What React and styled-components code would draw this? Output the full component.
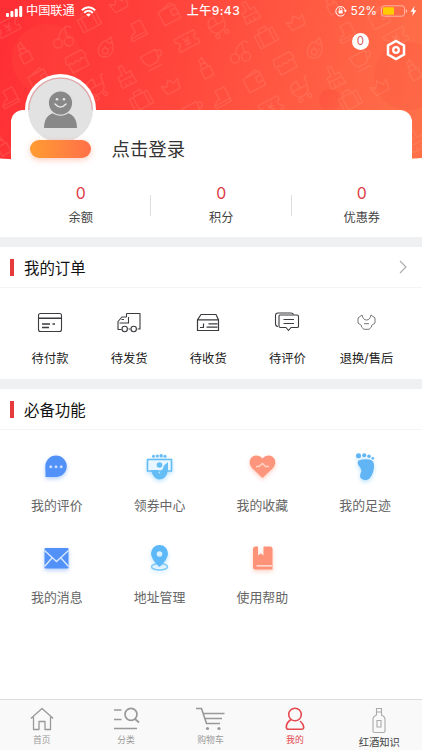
import React from 'react'
import styled, { createGlobalStyle } from 'styled-components'

const GlobalStyle = createGlobalStyle`
    * {
        box-sizing: border-box;
    }

    body {
        margin: 0;
        background: #fff;
        font-family: 'Inter', 'Noto Sans CJK SC', sans-serif;
        color: #222;
    }
`

const Page = styled.div`
    height: 750px;
    width: 422px;
    display: flex;
    flex-direction: column;
    overflow: hidden;
    background: #fff;
`

const Hero = styled.header`
    position: relative;
    height: 237px;
    flex-shrink: 0;
`

const Backdrop = styled.svg`
    position: absolute;
    top: 0;
    left: 0;
    display: block;
`

const StatusBar = styled.div`
    position: relative;
    height: 22px;
    padding: 0 5px 0 6px;
    display: grid;
    grid-template-columns: 1fr auto 1fr;
    align-items: center;
    color: #fff;
    font-size: 12px;
    line-height: 22px;
`

const StatusGroup = styled.div`
    display: flex;
    align-items: center;
    justify-content: ${props => props.$end ? 'flex-end' : 'flex-start'};
    gap: ${props => props.$end ? '4px' : '3px'};
`

const Carrier = styled.span`
    font-size: 12.2px;
    margin-right: 3px;
`

const Time = styled.div`
    padding-left: 4px;
    font-size: 12px;
    font-weight: 500;
    letter-spacing: .45px;
`

const Toolbar = styled.div`
    position: relative;
    height: 88px;
    padding: 11px 16px 0 0;
    display: flex;
    justify-content: flex-end;
    gap: 17px;
`

const Badge = styled.span`
    width: 17px;
    height: 17px;
    border-radius: 50%;
    background: #fff;
    color: #d9605f;
    font-size: 11.5px;
    line-height: 17px;
    text-align: center;
`

const SettingsIcon = styled.svg`
    margin-top: 6px;
`

const Card = styled.div`
    position: relative;
    height: 127px;
    margin: 0 10.5px;
    border-radius: 12px 12px 0 0;
    background: #fff;
`

const Profile = styled.div`
    height: 73px;
    padding-left: 14.5px;
    display: flex;
    gap: 15.5px;
`

const AvatarBox = styled.div`
    width: 71px;
    margin-top: -36px;
    display: flex;
    flex-direction: column;
    align-items: center;
`

const Avatar = styled.svg`
    flex-shrink: 0;
`

const Pill = styled.div`
    position: relative;
    flex-shrink: 0;
    width: 61px;
    height: 18px;
    margin-top: -5px;
    border-radius: 9px;
    background: linear-gradient(90deg, #ff9c32, #ff7049);
    box-shadow: 0 2px 6px rgba(255, 112, 73, .35);
`

const LoginText = styled.div`
    padding-top: 26px;
    font-size: 18.4px;
    line-height: 27px;
    color: #333;
`

const Stats = styled.div`
    width: 421.5px;
    display: grid;
    grid-template-columns: repeat(3, 1fr);
`

const Stat = styled.div`
    position: relative;
    height: 50px;
    text-align: center;

    & + &::before {
        content: '';
        position: absolute;
        left: -1px;
        top: 12px;
        width: 1px;
        height: 21px;
        background: #dedede;
    }
`

const StatValue = styled.div`
    font-size: 15.8px;
    line-height: 22px;
    color: #dc3a44;
`

const StatLabel = styled.div`
    margin-top: 4px;
    font-size: 12.2px;
    line-height: 18px;
    color: #444;
`

const Divider = styled.div`
    height: 10px;
    flex-shrink: 0;
    background: #eff0f2;
`

const SectionHead = styled.div`
    height: 41px;
    flex-shrink: 0;
    padding: 0 15px 0 10px;
    display: flex;
    align-items: center;
    border-bottom: 1px solid #f4f4f4;
`

const Mark = styled.span`
    width: 4px;
    height: 17px;
    margin-right: 10px;
    background: #e63a3c;
`

const SectionTitle = styled.h2`
    flex: 1;
    margin: 0;
    padding-top: 3px;
    font-size: 15.4px;
    font-weight: 400;
    line-height: 22px;
    color: #111;
`

const Orders = styled.div`
    height: 91px;
    flex-shrink: 0;
    padding: 21px 16px 0 10.5px;
    display: grid;
    grid-template-columns: repeat(5, 1fr);
`

const Order = styled.div`
    display: flex;
    flex-direction: column;
    align-items: center;
    gap: 14px;
    font-size: 12.3px;
    line-height: 18px;
    color: #222;
`

const Features = styled.div`
    flex: 1;
    padding: 21px 5.5px 0;
    display: grid;
    grid-template-columns: repeat(4, 1fr);
    grid-auto-rows: 91.5px;
`

const Feature = styled.div`
    display: flex;
    flex-direction: column;
    align-items: center;
    gap: 14px;
    font-size: 12.9px;
    line-height: 18px;
    color: #666;
`

const FeatureIcon = styled.svg`
    overflow: visible;
    filter: drop-shadow(0 2px 2px ${props => props.$glow});
`

const TabBar = styled.nav`
    height: 51px;
    flex-shrink: 0;
    display: grid;
    grid-template-columns: repeat(5, 1fr);
    border-top: 1px solid #dcdcdc;
    background: #f9f9f9;
`

const Tab = styled.a`
    padding-top: 7px;
    padding-right: 1px;
    display: flex;
    flex-direction: column;
    align-items: center;
    gap: ${props => props.$large ? '2px' : '1px'};
    font-size: ${props => props.$large ? '10.3px' : '8.8px'};
    line-height: 13px;
    color: ${props => props.$large ? '#444' : props.$active ? '#e5484d' : '#999'};
`

// line drawings scattered over the banner, each one centred on 0,0
const shapes = {
    ticket: <path d="M-11-7H11V-3A3 3 0 0 0 11 3V7H-11V3A3 3 0 0 0-11-3ZM-3-4 0 0 3-4M0 0V5M-3 0H3M-3 3H3" />,
    suitcase: <path d="M-10-6H10V8H-10ZM-4-6V-10H4V-6M-6-6V8M6-6V8" />,
    crown: <path d="M-7 6-9-4-4-1 0-7 4-1 9-4 7 6Z" />,
    boot: <path d="M-3-9H7V7H-10Q-11 1-3 0ZM-10 4H7" />,
    wallet: <path d="M-10-7H8V8H-10ZM8-3H2V3H8M-7-7 5-10 6-7" />,
    cherry: <path d="M-5 2Q-3-6 3-10Q2-3 6 2M3-10Q8-11 9-8M-1 6A4.500 4.500 0 1 1-10 6 4.500 4.500 0 1 1-1 6M10 5A4.500 4.500 0 1 1 1 5 4.500 4.500 0 1 1 10 5" />,
    lipstick: <path d="M-5 0H5V10H-5ZM-3 0V-5H3V0M-2-5V-9L2-11V-5" />,
    shop: <path d="M-9-8H9L11-2Q8 2 5-1Q2 3-1-1Q-5 3-7-1Q-10 1-11-2ZM-9 1V9H9V1" />,
    eggplant: <path d="M3-11Q1-8 0-7C-8-4-10 9-2 10S10 2 5-6ZM-1-6Q2-3 6-6M3 4A3 3 0 1 1-3 4 3 3 0 1 1 3 4M-2 0H0M4 0H5" />,
    cup: <path d="M-10-6H7Q7 6 1 6H-5Q-10 4-10-6ZM7-4Q12-5 11-1T5 2M-9 10H6" />,
    brush: <path d="M-2-2V-11H2V-2H7V3H-7V-2ZM-7 3-8 10H8L7 3M-3 10V6M2 10V6" />,
    stroller: <path d="M-9-2H8A8 8 0 0 1-9-2ZM8-2 9-10H12M-9-2Q-9-10 0-10V-2M-3 9A2 2 0 1 1-7 9 2 2 0 1 1-3 9M7 9A2 2 0 1 1 3 9 2 2 0 1 1 7 9" />,
}

const scatter = [
    ['ticket', 8, 27], ['crown', 119, 4], ['suitcase', 89, 21], ['boot', 138, 31], ['wallet', 170, 14],
    ['ticket', 187, 41], ['cherry', 63, 37, -5], ['lipstick', 24, 53], ['shop', 77, 61], ['eggplant', 106, 47, 10],
    ['cup', 152, 58], ['brush', 125, 76], ['crown', 171, 86], ['lipstick', 205, 68], ['boot', 10, 98],
    ['suitcase', 141, 100], ['stroller', 97, 88], ['wallet', 40, 79], ['cup', 193, 110], ['stroller', 218, 26],
    ['brush', 249, 12], ['crown', 296, 22], ['suitcase', 266, 37], ['cherry', 240, 52, -5], ['shop', 285, 63],
    ['eggplant', 315, 48, 10], ['boot', 347, 33], ['wallet', 380, 18], ['ticket', 396, 38], ['cup', 361, 59],
    ['lipstick', 413, 70], ['brush', 334, 77], ['crown', 380, 87], ['stroller', 301, 90], ['wallet', 255, 81],
    ['boot', 222, 98], ['ticket', 271, 107], ['suitcase', 350, 100], ['lipstick', 331, 4],
    ['lipstick', 2, 145], ['brush', 416, 140],
]

const Banner = () => (
    <Backdrop width="422" height="160" viewBox="0 0 422 160">
        <defs>
            <linearGradient id="banner" gradientUnits="userSpaceOnUse" x1="0" y1="60" x2="410" y2="160">
                <stop offset="0" stopColor="#fe3035" />
                <stop offset=".3" stopColor="#ff3f3a" />
                <stop offset="1" stopColor="#ff7049" />
            </linearGradient>
            <linearGradient id="bubble" x1="0" y1="0" x2="1" y2="1">
                <stop offset="0" stopColor="#ff4a3c" stopOpacity=".5" />
                <stop offset="1" stopColor="#f8453c" stopOpacity=".1" />
            </linearGradient>
        </defs>
        <path d="M0 0H422V158Q211 172 0 158.500Z" fill="url(#banner)" />
        <circle cx="47" cy="59" r="35" fill="#ff5a40" opacity=".18" />
        <circle cx="330" cy="100" r="11" fill="url(#bubble)" />
        <circle cx="408" cy="76" r="34" fill="#f84a3c" opacity=".2" />
        <g fill="none" stroke="#ffb0a0" strokeOpacity=".17" strokeWidth="1.400" strokeLinejoin="round">
            {scatter.map(([name, x, y, turn = -28], i) => (
                <g key={i} transform={`translate(${x} ${y}) rotate(${turn})`}>{shapes[name]}</g>
            ))}
        </g>
    </Backdrop>
)

const Signal = () => (
    <svg width="17" height="11" viewBox="0 0 17 11" fill="#fff">
        <rect x="0" y="7" width="3" height="4" rx="1" />
        <rect x="4.400" y="5" width="3" height="6" rx="1" />
        <rect x="8.800" y="2.800" width="3" height="8.200" rx="1" />
        <rect x="13.200" y="0" width="3" height="11" rx="1" />
    </svg>
)

const Wifi = () => (
    <svg width="15" height="11" viewBox="0 0 15 11" fill="none" stroke="#fff" strokeWidth="1.900">
        <path d="M.8 4.200Q7.500-1.900 14.200 4.200M3.200 6.700Q7.500 2.900 11.800 6.700" />
        <path d="M5.200 8.400Q7.500 6.600 9.800 8.400L7.500 10.800Z" fill="#fff" stroke="none" />
    </svg>
)

const Lock = () => (
    <svg width="12" height="12" viewBox="0 0 12 12" fill="none" stroke="#fff" strokeWidth="1">
        <path d="M9.600 9A4.800 4.800 0 1 1 10.300 5.300" />
        <path d="M8.600 5.200H12L10.300 7.500Z" fill="#fff" stroke="none" />
        <rect x="3.600" y="5.300" width="4" height="3.200" fill="#fff" stroke="none" />
        <path d="M4.300 5.500V4.300A1.300 1.300 0 0 1 6.900 4.300V5.500" strokeWidth=".8" />
    </svg>
)

const Battery = () => (
    <svg width="36" height="12" viewBox="0 0 36 12">
        <rect x=".5" y=".8" width="23" height="10.400" rx="2.500" fill="none" stroke="#fff" strokeOpacity=".55" strokeWidth=".9" />
        <rect x="2" y="2.300" width="11" height="7.400" rx=".8" fill="#ffcc00" />
        <path d="M24.800 4V8Q26.200 7.500 26.200 6T24.800 4Z" fill="#fff" opacity=".55" />
        <path d="M33.500 1 29.500 6.700H32L31.300 11 35.400 5.300H32.800Z" fill="#fff" />
    </svg>
)

const Settings = () => (
    <SettingsIcon width="20" height="22" viewBox="0 0 20 22" fill="none" stroke="#fff">
        <path d="M10 2 18 6.500V15.500L10 20 2 15.500V6.500Z" strokeWidth="2.500" />
        <circle cx="10" cy="11" r="2.800" strokeWidth="2.300" />
    </SettingsIcon>
)

const AvatarImage = () => (
    <Avatar width="71" height="71" viewBox="0 0 71 71">
        <circle cx="35.500" cy="35.500" r="35.500" fill="#fff" />
        <circle cx="35.500" cy="36" r="32.500" fill="#e2e2e3" />
        <path d="M3.700 36A31.800 31.800 0 0 1 67.300 36" fill="none" stroke="#e3a4a6" strokeWidth="1.300" />
        <path d="M19 54Q19 38 35.500 38T52 54Z" fill="#888" />
        <circle cx="35.500" cy="29" r="12.200" fill="#888" stroke="#e2e2e3" strokeWidth="1.200" />
        <circle cx="32" cy="25.300" r="1.300" fill="#e8e8e8" />
        <circle cx="39" cy="25.300" r="1.300" fill="#e8e8e8" />
        <path d="M30 30Q35.500 36 41 30" fill="none" stroke="#e8e8e8" strokeWidth="1.500" strokeLinecap="round" />
    </Avatar>
)

const Chevron = () => (
    <svg width="8" height="14" viewBox="0 0 8 14" fill="none" stroke="#aaa" strokeWidth="1.100">
        <path d="M1 1 7 7 1 13" />
    </svg>
)

const OrderIcon = ({ children }) => (
    <svg width="26" height="27" viewBox="0 0 26 27" fill="none" stroke="#3b3b40" strokeWidth="1.100" strokeLinejoin="round">
        {children}
    </svg>
)

const orders = [
    {
        label: '待付款',
        icon: <>
            <rect x="1.500" y="4.500" width="23" height="18" rx="2" />
            <path d="M1.500 9.200H24.500M5 15H13M15.500 15H18M5 18.500H12" strokeWidth="1.600" />
        </>,
    },
    {
        label: '待发货',
        icon: <>
            <path d="M10.500 8H6L2 12.500V20.500H5.500M10.500 4.500V8M10.500 4.500H24V20H21.500M12.500 8V14H3.500M12.500 20H14.500M5.500 10.500H8" />
            <circle cx="8.700" cy="20" r="2.700" />
            <circle cx="17.700" cy="20" r="2.700" />
        </>,
    },
    {
        label: '待收货',
        icon: <path d="M6 5.500H21L23.500 10.800V21.500H2.500V10.800ZM2.500 10.800H23.500M13.500 14.800H22.500M11.500 18.200H22.500M8.500 14.500V18.500H5" strokeWidth="1.200" />,
    },
    {
        label: '待评价',
        icon: <>
            <path d="M4 17.500Q1.500 17.500 1.500 14.500V6.500Q1.500 4 4 4H17Q19 4 19.500 5.500" />
            <path d="M6 6H23Q24.500 6 24.500 7.500V17.500Q24.500 18.500 23 18.500H17L14.500 21.500 12 18.500H6.500Q5 18.500 5 17V7.500Q5 6 6 6ZM9.500 10.500H20M9.500 14.500H20" />
        </>,
    },
    {
        label: '退换/售后',
        icon: <path d="M9 6Q10 11 13.500 11T18 6L22 9V14L18.500 16.500V18L16 20.300H11L8.500 18V16.500L5 14V9ZM11 14.700H16" strokeWidth=".9" stroke="#67676b" />,
    },
]

const features = [
    {
        label: '我的评价',
        glow: 'rgba(74, 137, 255, .4)',
        icon: <>
            <path d="M15 4.500A10.700 10.700 0 1 1 15 26H4.500V22Q4.300 18 4.300 15.200A10.700 10.700 0 0 1 15 4.500Z" fill="#5291f8" />
            <g fill="#c4dcff">
                <circle cx="9.800" cy="15.700" r="1.500" />
                <circle cx="15" cy="15.700" r="1.500" />
                <circle cx="20.200" cy="15.700" r="1.500" />
            </g>
        </>,
    },
    {
        label: '领券中心',
        glow: 'rgba(90, 185, 250, .4)',
        icon: <>
            <path d="M3.500 8.500H27.500V20H3.500Z" fill="#e8f6ff" stroke="#65bdf6" strokeWidth="1.600" />
            <circle cx="15.500" cy="14" r="2.800" fill="#65bdf6" />
            <path d="M20 14.500 24 11V20H18Z" fill="#65bdf6" />
            <path d="M7 19H14L15 23 18 18.500H24Q23 28 15.500 28.500Q9 28 7 19Z" fill="#65bdf6" />
            <g fill="#65bdf6">
                <circle cx="9.500" cy="5.300" r="1.500" />
                <circle cx="13.300" cy="5" r="1.500" />
                <circle cx="17.200" cy="4.700" r="1.700" />
                <circle cx="21" cy="5.300" r="1.500" />
            </g>
        </>,
    },
    {
        label: '我的收藏',
        glow: 'rgba(255, 140, 110, .4)',
        icon: <>
            <path d="M15.500 27 5 17C0 11 4 4.500 9 4.500Q13 4.500 15.500 7.500Q18 4.500 22 4.500C27 4.500 31 11 26 17Z" fill="#fd967c" />
            <path d="M9 15.500H12L15.500 12.500 18.500 15.500H22" fill="none" stroke="#ffd5c8" strokeWidth="1.300" />
        </>,
    },
    {
        label: '我的足迹',
        glow: 'rgba(90, 185, 250, .4)',
        icon: <g fill="#61b5f5">
            <path d="M8.500 9.500Q14 7.500 19.500 8.500Q24.500 9.500 24 16Q23.500 23 19.500 27.500Q15 31 10.500 27Q9.500 24 11.500 20Q11 17 9 15Q6.500 12 8.500 9.500Z" />
            <circle cx="8.500" cy="4.800" r="2.500" />
            <circle cx="14.200" cy="4.300" r="2" />
            <circle cx="19" cy="5.300" r="1.700" />
            <circle cx="22.800" cy="7.300" r="1.300" />
        </g>,
    },
    {
        label: '我的消息',
        glow: 'rgba(74, 137, 255, .4)',
        icon: <>
            <rect x="3.500" y="5" width="24" height="20.500" rx="1" fill="#5291f8" />
            <path d="M3.500 7.500 15.500 18.500 27.500 7.500M3.500 23.500 11 15M27.500 23.500 20 15" fill="none" stroke="#d5e6ff" strokeWidth="1.500" />
        </>,
    },
    {
        label: '地址管理',
        glow: 'rgba(90, 185, 250, .4)',
        icon: <>
            <ellipse cx="15.500" cy="23.800" rx="8" ry="3.200" fill="none" stroke="#7bcaf8" strokeWidth="1.500" />
            <path d="M15.500 24Q7 16 7 10.500A8.500 8.500 0 0 1 24 10.500Q24 16 15.500 24Z" fill="#5cb8f8" />
            <circle cx="15.500" cy="11" r="2.800" fill="#d9f0ff" />
        </>,
    },
    {
        label: '使用帮助',
        glow: 'rgba(255, 140, 110, .4)',
        icon: <>
            <path d="M8.500 3.500H11V12.500L13.800 10.500 16.500 12.500V3.500H23Q25.500 3.500 25.500 6V26.500H8.500Q6 26.500 6 24V6Q6 3.500 8.500 3.500Z" fill="#fd9279" />
            <path d="M9.500 22.800H25.500" stroke="#ffd8cd" strokeWidth="1.600" />
        </>,
    },
]

const TabIcon = ({ color = '#999', height = 25, children }) => (
    <svg width="30" height={height} viewBox={`0 0 30 ${height}`} fill="none" stroke={color} strokeWidth="1.300">
        {children}
    </svg>
)

const tabs = [
    {
        label: '首页',
        icon: <TabIcon><path d="M3.800 11.500 15 1.500 26.200 11.500M6.500 10V22.500H12V14.500H18V22.500H23.500V10" strokeLinejoin="round" /></TabIcon>,
    },
    {
        label: '分类',
        icon: <TabIcon>
            <path d="M3 3H10.500M3 12.500H10.500M3 21.500H26" strokeWidth="1.600" />
            <circle cx="20" cy="7.300" r="6" strokeWidth="1.700" />
            <path d="M24 12 28 15.500" strokeWidth="1.700" />
        </TabIcon>,
    },
    {
        label: '购物车',
        icon: <TabIcon>
            <path d="M1 1.500H6.500L11.500 16.500H25M8 6.500H29.500M9.500 11.500H27" strokeWidth="1.600" />
            <circle cx="12.500" cy="21.500" r="1.600" fill="#999" stroke="none" />
            <circle cx="24" cy="21.500" r="1.600" fill="#999" stroke="none" />
        </TabIcon>,
    },
    {
        label: '我的',
        active: true,
        icon: <TabIcon color="#e5484d">
            <circle cx="15" cy="7.500" r="6.300" strokeWidth="1.600" />
            <path d="M10.500 13Q6.500 15.500 6.300 20Q6.300 22.300 8.500 22.300H21.500Q23.800 22.300 23.700 20Q23.500 17 20.500 14.500" strokeWidth="1.600" strokeLinecap="round" />
        </TabIcon>,
    },
    {
        label: '红酒知识',
        large: true,
        icon: <TabIcon color="#aaa" height={27}>
            <path d="M12.500 1.500H17.500V8Q21 9.500 21 12.500V24Q21 25.500 19.500 25.500H10.500Q9 25.500 9 24V12.500Q9 9.500 12.500 8ZM12.500 5H17.500M13 13.500H17V20H13Z" strokeWidth="1.100" />
        </TabIcon>,
    },
]

const stats = ['余额', '积分', '优惠券']

const App = () => {
    return (
      <Page>
        <GlobalStyle />
        <Hero>
            <Banner />
            <StatusBar>
                <StatusGroup>
                    <Signal />
                    <Carrier>中国联通</Carrier>
                    <Wifi />
                </StatusGroup>
                <Time>上午9:43</Time>
                <StatusGroup $end>
                    <Lock />
                    <span>52%</span>
                    <Battery />
                </StatusGroup>
            </StatusBar>
            <Toolbar>
                <Badge>0</Badge>
                <Settings />
            </Toolbar>
            <Card>
                <Profile>
                    <AvatarBox>
                        <AvatarImage />
                        <Pill />
                    </AvatarBox>
                    <LoginText>点击登录</LoginText>
                </Profile>
                <Stats>
                    {stats.map(label => (
                        <Stat key={label}>
                            <StatValue>0</StatValue>
                            <StatLabel>{label}</StatLabel>
                        </Stat>
                    ))}
                </Stats>
            </Card>
        </Hero>

        <Divider />
        <SectionHead>
            <Mark />
            <SectionTitle>我的订单</SectionTitle>
            <Chevron />
        </SectionHead>
        <Orders>
            {orders.map(order => (
                <Order key={order.label}>
                    <OrderIcon>{order.icon}</OrderIcon>
                    {order.label}
                </Order>
            ))}
        </Orders>

        <Divider />
        <SectionHead>
            <Mark />
            <SectionTitle>必备功能</SectionTitle>
        </SectionHead>
        <Features>
            {features.map(item => (
                <Feature key={item.label}>
                    <FeatureIcon width="31" height="32" viewBox="0 0 31 32" $glow={item.glow}>{item.icon}</FeatureIcon>
                    {item.label}
                </Feature>
            ))}
        </Features>

        <TabBar>
            {tabs.map(tab => (
                <Tab key={tab.label} $active={tab.active} $large={tab.large}>
                    {tab.icon}
                    {tab.label}
                </Tab>
            ))}
        </TabBar>
      </Page>
    )
}

export default App
